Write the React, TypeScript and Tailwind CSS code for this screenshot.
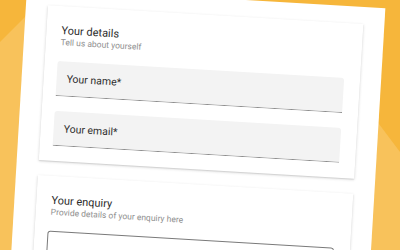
import React from "react";

function Card({
  title,
  subtitle,
  className = "",
  children,
}: {
  title: string;
  subtitle: string;
  className?: string;
  children: React.ReactNode;
}) {
  return (
    <div
      className={`bg-white pt-[18.5px] pl-[13px] pr-[16px] pb-[15px] shadow-[0_1px_3px_rgba(0,0,0,0.16),0_1px_1px_rgba(0,0,0,0.08)] ${className}`}
    >
      <div className="ml-[2px] text-[11px] leading-[12px] text-[#2b2b2b]">{title}</div>
      <div className="ml-[2px] text-[8.5px] leading-[10.5px] text-[#8f8f8f]">{subtitle}</div>
      <div className="mt-[14px] flex flex-col gap-[15px]">{children}</div>
    </div>
  );
}

function Filled({ label }: { label: string }) {
  return (
    <div className="flex h-[35px] items-center rounded-t-[3px] border-b border-[#8e8e8e] bg-[#f3f3f3] pl-[10px] pt-[2px] text-[10.5px] text-[#2e2e2e]">
      {label}
    </div>
  );
}

export default function App() {
  return (
    <div className="relative h-[250px] w-[400px] overflow-hidden bg-[#F6B63B] font-['Roboto',sans-serif]">
      <svg className="absolute inset-0" width="400" height="250" viewBox="0 0 400 250">
        <polygon points="0,42 30,12 30,250 0,250" fill="#F8C25B" />
        <polygon points="376,120 400,152 400,250 360,250" fill="#F8C25B" />
      </svg>
      <div className="relative ml-[27px] -mt-[13.3px] w-[359px] origin-top-left rotate-[3.4deg] bg-white pt-[17px] pl-[22px] pr-[21px] pb-[40px]">
        <Card title="Your details" subtitle="Tell us about yourself">
          <Filled label="Your name*" />
          <Filled label="Your email*" />
        </Card>
        <Card
          title="Your enquiry"
          subtitle="Provide details of your enquiry here"
          className="mt-[15px]"
        >
          <div className="h-[90px] rounded-[3px] border border-[#7a7a7a]" />
        </Card>
      </div>
    </div>
  );
}
